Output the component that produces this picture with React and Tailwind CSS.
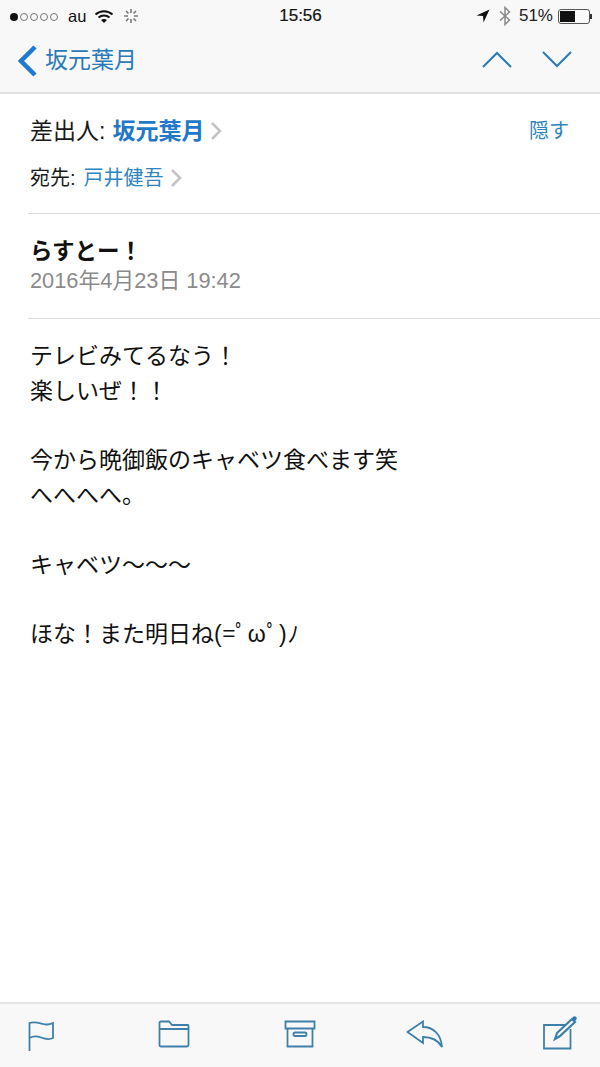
import React from 'react';

const SANS = "font-['Liberation_Sans','Noto_Sans_CJK_JP',sans-serif]";

function StatusBar() {
  return (
    <div className="h-[32px] flex items-center justify-between pl-[9px] pr-[8px] text-[17px] text-[#111]">
      <div className="w-[200px] flex items-center">
        <svg width="50" height="12" viewBox="0 0 50 12" className="mt-px">
          <circle cx="5" cy="6" r="4" fill="#111" />
          {[15, 25, 35, 45].map((x) => (
            <circle key={x} cx={x} cy="6" r="3.5" fill="none" stroke="#555" strokeWidth="0.8" />
          ))}
        </svg>
        <span className="ml-[9px] text-[16.5px]">au</span>
        <svg width="20" height="15" viewBox="0 0 20 15" className="ml-[8px]">
          <path d="M1.5 5.5C6.5 1 13.5 1 18.5 5.5" fill="none" stroke="#111" strokeWidth="2" />
          <path d="M4.5 8.5C7.5 5.8 12.5 5.8 15.5 8.5" fill="none" stroke="#111" strokeWidth="2" />
          <path d="M7 11C8.5 9.7 11.5 9.7 13 11L10 14Z" fill="#111" />
        </svg>
        <svg width="16" height="16" viewBox="0 0 16 16" className="ml-[9px]" stroke="#777" strokeWidth="1.6">
          <path d="M8 1V5M8 11V15M1 8H5M11 8H15M3 3L5.5 5.5M10.5 10.5L13 13M13 3L10.5 5.5M5.5 10.5L3 13" />
        </svg>
      </div>
      <span className="text-[17px] [-webkit-text-stroke:0.2px_#111]">15:56</span>
      <div className="w-[200px] flex items-center justify-end">
        <svg width="14" height="14" viewBox="0 0 14 14">
          <path d="M13.5 0.5L0.5 6.5L7 7L7.5 13.5Z" fill="#111" />
        </svg>
        <svg width="12" height="20" viewBox="0 0 12 20" className="ml-[9px]" fill="none" stroke="#888" strokeWidth="1.5">
          <path d="M1 5.5L10.5 14L6 18.5V1.5L10.5 6L1 14.5" />
        </svg>
        <span className="ml-[8px] text-[17px] text-[#222]">51%</span>
        <div className="ml-[5px] w-[32px] h-[15px] border border-[#555] rounded-[3px] p-px flex">
          <div className="w-[15px] bg-[#111]" />
        </div>
        <div className="w-[2px] h-[5px] bg-[#333]" />
      </div>
    </div>
  );
}

function NavBar() {
  return (
    <div className="h-[62px] border-b-2 border-[#e2e2e2] flex items-center justify-between pb-[3px] pl-[18px] pr-[28px]">
      <div className="flex items-center">
        <svg width="19" height="32" viewBox="0 0 19 32" fill="none" stroke="#1f78d1" strokeWidth="4.5">
          <path d="M17 2L3 16L17 30" />
        </svg>
        <span className="ml-[8px] text-[23px] leading-none text-[#2a7ab8]">坂元葉月</span>
      </div>
      <div className="flex items-center gap-[30px] -mt-[3px]">
        <svg width="30" height="17" viewBox="0 0 30 17" fill="none" stroke="#2a7ab8" strokeWidth="2">
          <path d="M1 16L15 2L29 16" />
        </svg>
        <svg width="30" height="17" viewBox="0 0 30 17" fill="none" stroke="#2a7ab8" strokeWidth="2">
          <path d="M1 1L15 15L29 1" />
        </svg>
      </div>
    </div>
  );
}

function Chevron() {
  return (
    <svg width="12" height="20" viewBox="0 0 12 20" fill="none" stroke="#c4c4c8" strokeWidth="2.6" className="ml-[6px]">
      <path d="M2 2L10 10L2 18" />
    </svg>
  );
}

function Details() {
  return (
    <div className="ml-[28px]">
      <div className="h-[120px] border-b border-[#dcdcdc] pt-[21px] pl-[2px] pr-[31px]">
        <div className="flex items-center justify-between h-[32px]">
          <div className="flex items-center text-[23px] leading-none text-[#1a1a1a]">
            <span>差出人:</span>
            <span className="ml-[7px] font-bold text-[#1f78c8]">坂元葉月</span>
            <Chevron />
          </div>
          <span className="text-[20px] leading-none text-[#2f86bf]">隠す</span>
        </div>
        <div className="flex items-center h-[30px] mt-[16px] text-[20px] leading-none text-[#1a1a1a]">
          <span>宛先:</span>
          <span className="ml-[8px] text-[#2f86bf]">戸井健吾</span>
          <Chevron />
        </div>
      </div>
      <div className="h-[105px] border-b border-[#dcdcdc] pt-[21px] pl-[2px]">
        <div className="text-[22.5px] leading-[34px] font-bold text-[#111]">らすとー！</div>
        <div className="text-[21.8px] leading-[23px] text-[#8a8a8a]">2016年4月23日 19:42</div>
      </div>
    </div>
  );
}

function Body() {
  const lines = [
    'テレビみてるなう！',
    '楽しいぜ！！',
    '',
    '今から晩御飯のキャベツ食べます笑',
    'へへへへ。',
    '',
    'キャベツ〜〜〜',
    '',
  ];
  return (
    <div className="flex-1 pl-[30px] pt-[20px] text-[23px] leading-[34.8px] text-[#111]">
      {lines.map((line, i) => (
        <div key={i} className="h-[34.8px]">{line}</div>
      ))}
      <div className="h-[34.8px]">
        ほな！また明日ね<span className="tracking-[0.9px]">(=ﾟωﾟ)ﾉ</span>
      </div>
    </div>
  );
}

function Toolbar() {
  const stroke = { fill: 'none', stroke: '#3f80a8', strokeWidth: 1.8 };
  return (
    <div className="h-[65px] border-t-2 border-[#e4e4e4] flex items-start pl-[27px] pt-[16px]">
      <svg width="28" height="32" viewBox="0 0 28 32" {...stroke}>
        <path d="M2.5 31V3C8 1.5 12 3 16 4C20 5 23 4.5 26 3V18C22 20 18 19 14 17.5C10 16 6 16 2.5 18" />
      </svg>
      <svg width="32" height="28" viewBox="0 0 32 28" className="ml-[103px]" {...stroke}>
        <path d="M1.5 25V3C1.5 2 2 1.5 3 1.5H11L14 5H30C30.5 5 30.5 5.5 30.5 6V25C30.5 26 30 26.5 29 26.5H3C2 26.5 1.5 26 1.5 25ZM1.5 9H30.5" />
      </svg>
      <svg width="32" height="28" viewBox="0 0 32 28" className="ml-[94px]" {...stroke}>
        <path d="M1.5 1.5H30.5V8.5H1.5ZM3.5 8.5V26.5H28.5V8.5M11 12.5H21C23 12.5 23 16 21 16H11C9 16 9 12.5 11 12.5Z" />
      </svg>
      <svg width="38" height="28" viewBox="0 0 38 28" className="ml-[90px]" {...stroke}>
        <path d="M1.5 12L17 1.5V7C27 7 35 14 36 27C32 20 26 17 17 17V23Z" />
      </svg>
      <svg width="36" height="34" viewBox="0 0 36 34" className="ml-[98px] -mt-[4px]" {...stroke}>
        <path d="M24 9H2V32.5H28.5V13" />
        <path d="M13 23L15 17L30 3L33 6L18 20Z" strokeWidth="2.2" />
        <circle cx="32.5" cy="2.5" r="2.2" fill="#2a7ab8" stroke="none" />
      </svg>
    </div>
  );
}

export default function App() {
  return (
    <div className={`w-[600px] h-[1067px] bg-white flex flex-col overflow-hidden ${SANS}`}>
      <div className="bg-[#f8f8f8]">
        <StatusBar />
        <NavBar />
      </div>
      <Details />
      <Body />
      <div className="bg-[#f8f8f8]">
        <Toolbar />
      </div>
    </div>
  );
}
